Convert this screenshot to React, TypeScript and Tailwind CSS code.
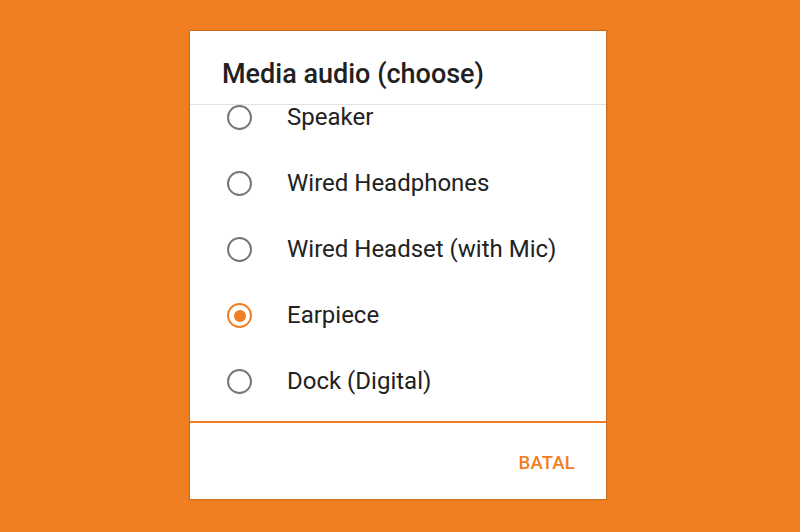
import React from 'react';

const OPTIONS = [
  { label: 'Speaker', checked: false },
  { label: 'Wired Headphones', checked: false },
  { label: 'Wired Headset (with Mic)', checked: false },
  { label: 'Earpiece', checked: true },
  { label: 'Dock (Digital)', checked: false },
];

function Radio({ checked }: { checked: boolean }) {
  return (
    <span
      className={
        checked
          ? 'w-[25px] h-[25px] rounded-full border-[2.5px] border-[#ef7f22] flex items-center justify-center shrink-0'
          : 'w-[25px] h-[25px] rounded-full border-[2.5px] border-[#767676] shrink-0'
      }
    >
      {checked && <span className="w-[12px] h-[12px] rounded-full bg-[#ef7f22]" />}
    </span>
  );
}

export default function App() {
  return (
    <div className="w-[800px] h-[532px] bg-[#ef7f22] pt-[31px] font-['Roboto',sans-serif]">
      <div className="ml-[190px] w-[416px] h-[468px] bg-white flex flex-col shadow-[0_0_1px_1px_rgba(0,0,0,0.15)]">
        {/* Title */}
        <div className="pl-[32px] pt-[27px] pb-[14px] border-b border-[#e2e2e2]">
          <h1 className="text-[27px] leading-[32px] font-medium text-[#212121]">Media audio (choose)</h1>
        </div>

        {/* Options (list sits scrolled, first row right under the divider) */}
        <div className="h-[316px]">
          <ul className="flex flex-col gap-[41px]">
            {OPTIONS.map((opt) => (
              <li key={opt.label} className="h-[25px] flex items-center pl-[37px] gap-[35px]">
                <Radio checked={opt.checked} />
                <span className="text-[24px] leading-[25px] text-[#222]">{opt.label}</span>
              </li>
            ))}
          </ul>
        </div>

        <div className="h-[2px] bg-[#ef7f22]" />

        {/* Actions */}
        <div className="flex-1 flex items-center justify-end pr-[31px] pt-[5px]">
          <button className="text-[18.5px] font-medium text-[#ef7f22] tracking-[0.2px]">BATAL</button>
        </div>
      </div>
    </div>
  );
}
